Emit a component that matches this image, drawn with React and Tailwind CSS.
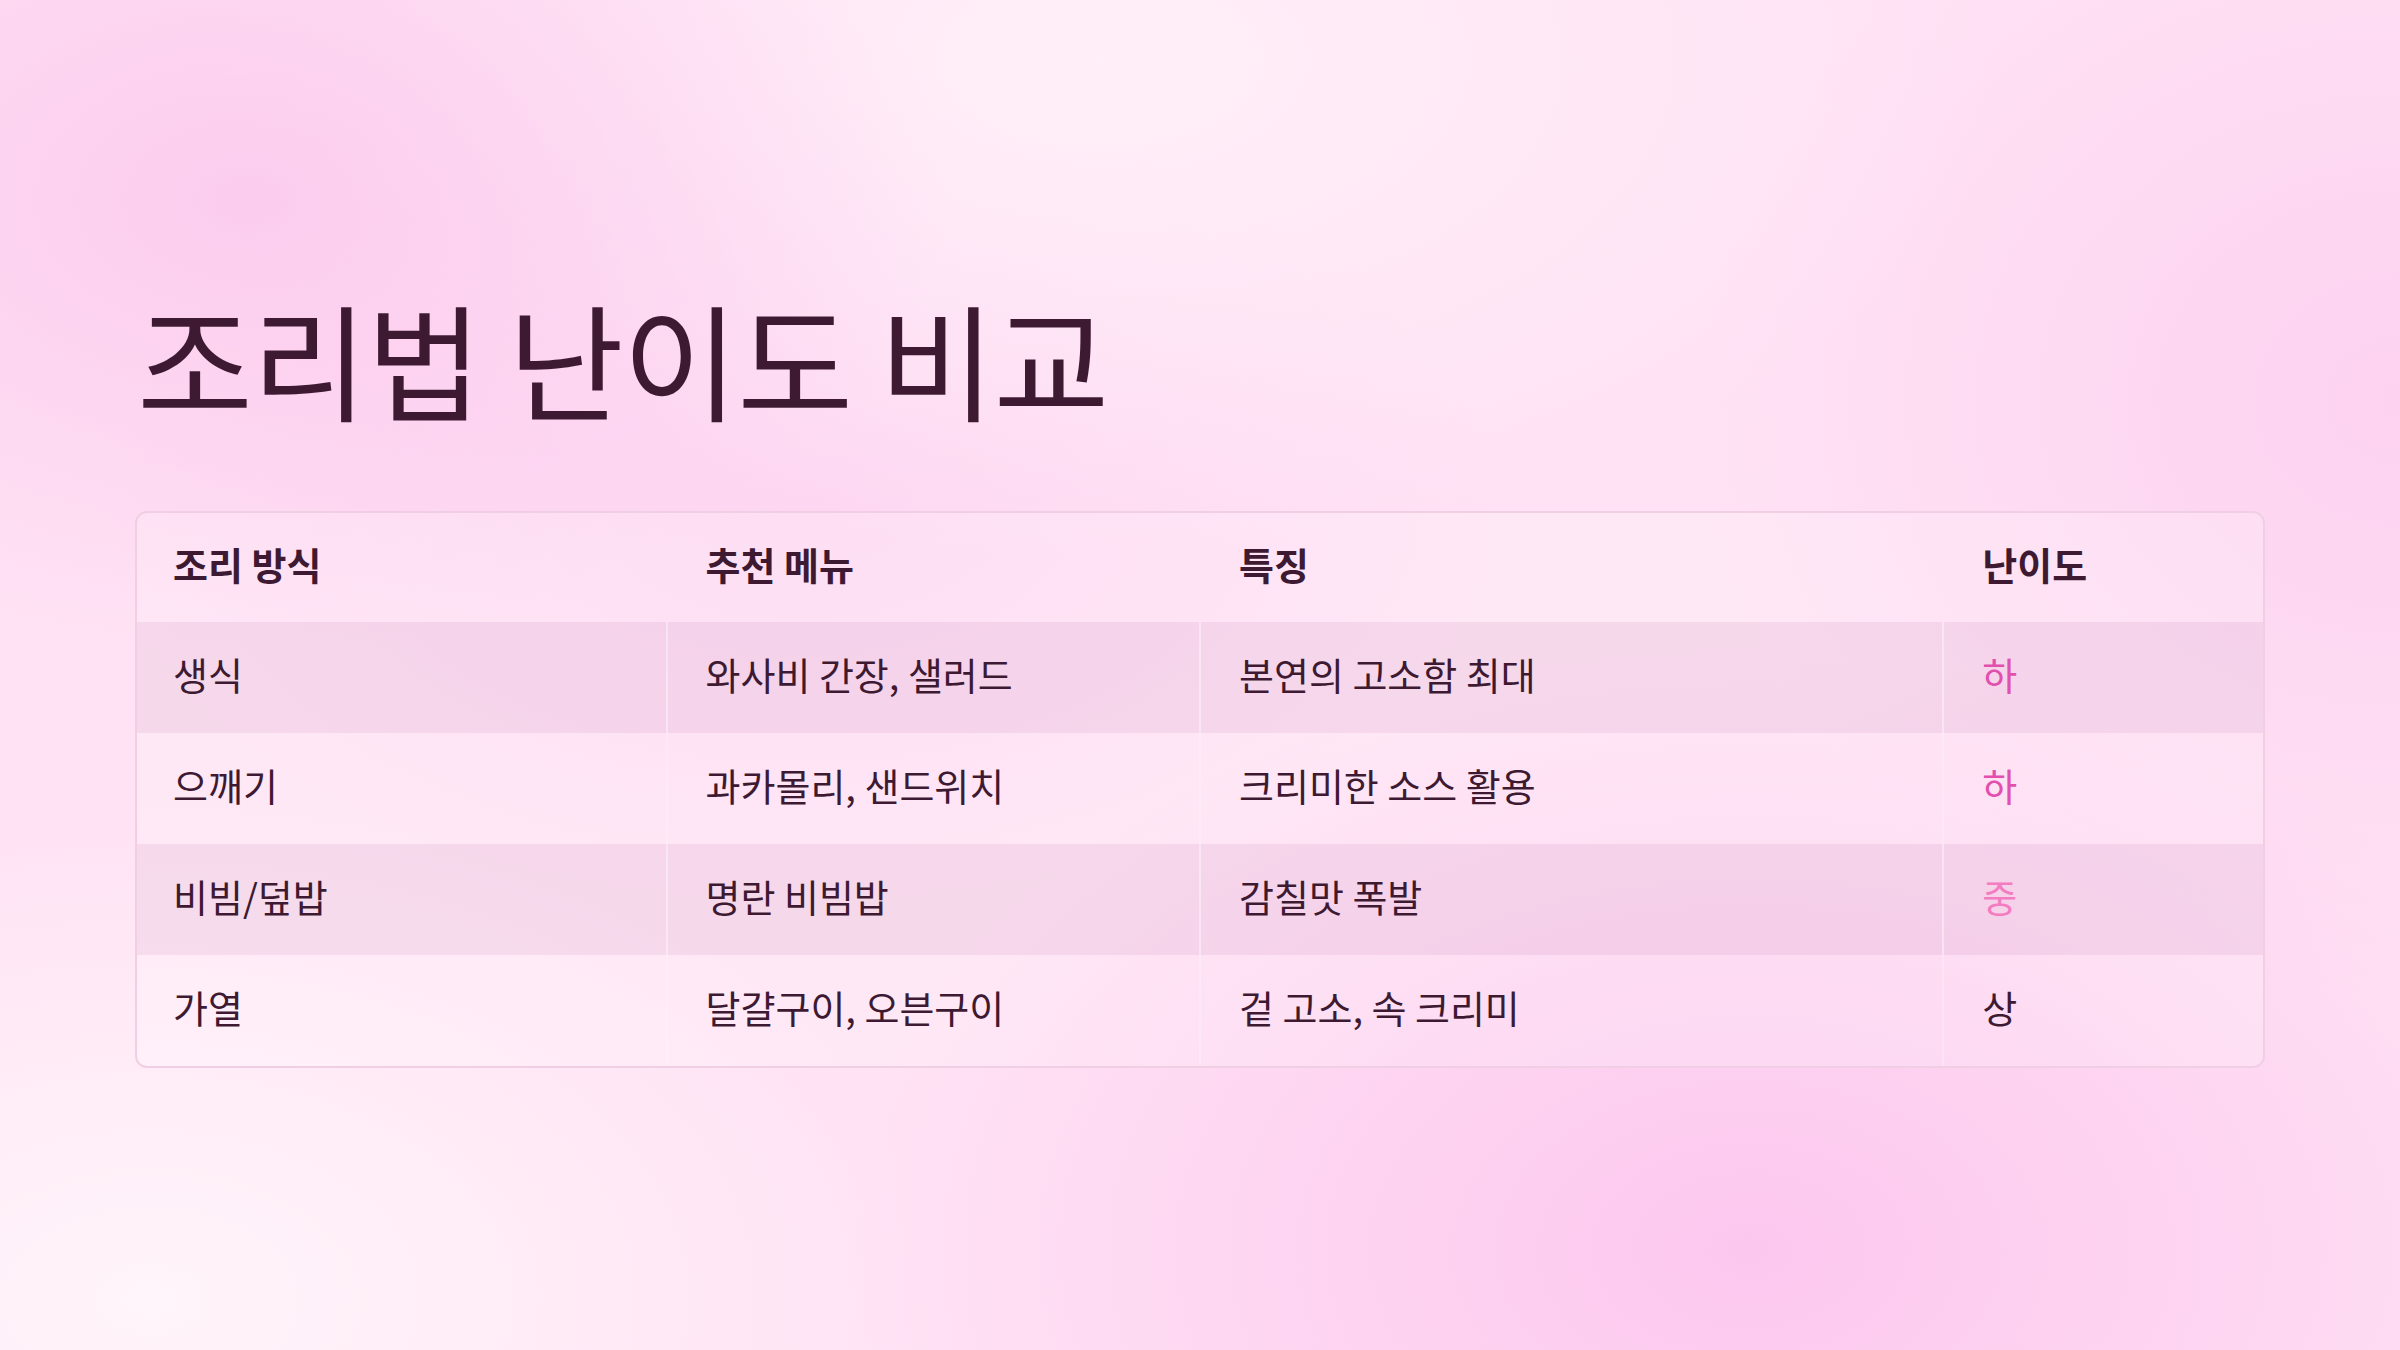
import React from "react";

const rows = [
  { a: "생식", b: "와사비 간장, 샐러드", c: "본연의 고소함 최대", d: "하", tone: "low" },
  { a: "으깨기", b: "과카몰리, 샌드위치", c: "크리미한 소스 활용", d: "하", tone: "low" },
  { a: "비빔/덮밥", b: "명란 비빔밥", c: "감칠맛 폭발", d: "중", tone: "mid" },
  { a: "가열", b: "달걀구이, 오븐구이", c: "겉 고소, 속 크리미", d: "상", tone: "high" },
];

const toneClass = {
  low: "text-[#e24fae]",
  mid: "text-[#f37dc0]",
  high: "text-[#3d1a32]",
};

export default function App() {
  return (
    <div
      className="w-[2400px] h-[1350px] overflow-hidden bg-[#ffe2f4] bg-[radial-gradient(ellipse_700px_450px_at_250px_200px,rgba(250,196,236,0.75),transparent),radial-gradient(ellipse_900px_500px_at_1100px_60px,rgba(255,240,249,0.9),transparent),radial-gradient(ellipse_900px_600px_at_1750px_1250px,rgba(252,196,238,0.9),transparent),radial-gradient(ellipse_800px_500px_at_150px_1300px,rgba(255,246,250,0.95),transparent),radial-gradient(ellipse_700px_600px_at_2400px_400px,rgba(252,206,240,0.8),transparent),radial-gradient(ellipse_700px_400px_at_800px_500px,rgba(252,205,240,0.6),transparent)]"
      style={{ fontFamily: '"Noto Sans CJK KR", "Noto Sans", sans-serif' }}
    >
      <div className="flex flex-col px-[135px] pt-[294px]">
        <h1 className="text-[126px] leading-none font-normal tracking-[-0.01em] text-[#3d1a32] pl-[2px]">
          조리법 난이도 비교
        </h1>
        <div className="mt-[91px] rounded-xl border-2 border-[#f0cfe4] bg-white/10 overflow-hidden">
          <div className="grid grid-cols-[531fr_534fr_744fr_319fr] h-[109px] items-center pb-[8px] bg-white/10 text-[38px] font-bold text-[#3d1a32]">
            <div className="pl-[36px]">조리 방식</div>
            <div className="pl-[38px]">추천 메뉴</div>
            <div className="pl-[38px]">특징</div>
            <div className="pl-[38px]">난이도</div>
          </div>
          {rows.map((r, i) => {
            const odd = i % 2 === 0;
            const cellBg = odd ? "bg-[rgba(200,155,192,0.17)]" : "bg-white/10";
            const sep = odd ? "border-white/40" : "border-white/20";
            return (
              <div
                key={i}
                className="grid grid-cols-[531fr_534fr_744fr_319fr] h-[111px] text-[38px] font-normal text-[#3d1a32]"
              >
                <div className={`flex items-center pb-[8px] pl-[36px] border-r-2 ${sep} ${cellBg}`}>{r.a}</div>
                <div className={`flex items-center pb-[8px] pl-[38px] border-r-2 ${sep} ${cellBg}`}>{r.b}</div>
                <div className={`flex items-center pb-[8px] pl-[38px] border-r-2 ${sep} ${cellBg}`}>{r.c}</div>
                <div className={`flex items-center pb-[8px] pl-[38px] ${cellBg} ${toneClass[r.tone]}`}>{r.d}</div>
              </div>
            );
          })}
        </div>
      </div>
    </div>
  );
}
